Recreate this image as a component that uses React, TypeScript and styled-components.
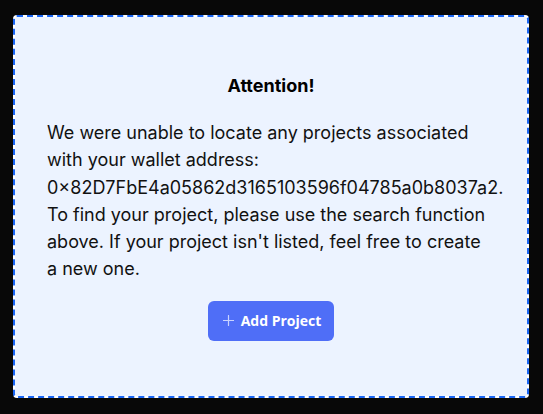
import React from "react";
import styled, { createGlobalStyle } from "styled-components";

const Global = createGlobalStyle`
  html, body { margin: 0; padding: 0; background: #080808; }
  body { font-family: Inter, "Noto Sans", sans-serif; }
`;

const Page = styled.div`
  padding: 15px 14px 16px 13px;
  width: 543px;
  height: 414px;
  box-sizing: border-box;
`;

const Card = styled.div`
  box-sizing: border-box;
  height: 100%;
  background: linear-gradient(#ecf3ff, #ecf3ff) padding-box, #ffffff border-box;
  border: 2px dashed #1a66f5;
  border-radius: 4px;
  padding: 57px 32px 0 32px;
  display: flex;
  flex-direction: column;
  align-items: center;
`;

const Title = styled.h2`
  margin: 0;
  font-size: 18px;
  font-weight: 700;
  color: #000;
  line-height: 24px;
`;

const Message = styled.p`
  margin: 21px 0 0 0;
  align-self: stretch;
  font-size: 18px;
  line-height: 27.3px;
  color: #111;
  font-weight: 400;
`;

const AddButton = styled.button`
  margin-top: 18px;
  width: 126px;
  height: 40px;
  border: none;
  border-radius: 6px;
  background: #4f6ef7;
  color: #fff;
  font-family: "Open Sans", Inter, sans-serif;
  font-weight: 700;
  font-size: 14px;
  display: flex;
  align-items: center;
  justify-content: center;
  gap: 7px;
  padding: 0 0 0 2px;
  cursor: pointer;
`;

const PlusIcon = () => (
  <svg width="11" height="11" viewBox="0 0 11 11" fill="none">
    <path d="M5.5 0.5v10M0.5 5.5h10" stroke="#c9d3ff" strokeWidth="1.2" strokeLinecap="round" />
  </svg>
);

export default function App() {
  return (
    <>
      <Global />
      <Page>
        <Card>
          <Title>Attention!</Title>
          <Message>
            We were unable to locate any projects associated with your wallet address:
            0×82D7FbE4a05862d3165103596f04785a0b8037a2. To find your project, please use the
            search function above. If your project isn't listed, feel free to create a new one.
          </Message>
          <AddButton>
            <PlusIcon />
            Add Project
          </AddButton>
        </Card>
      </Page>
    </>
  );
}
